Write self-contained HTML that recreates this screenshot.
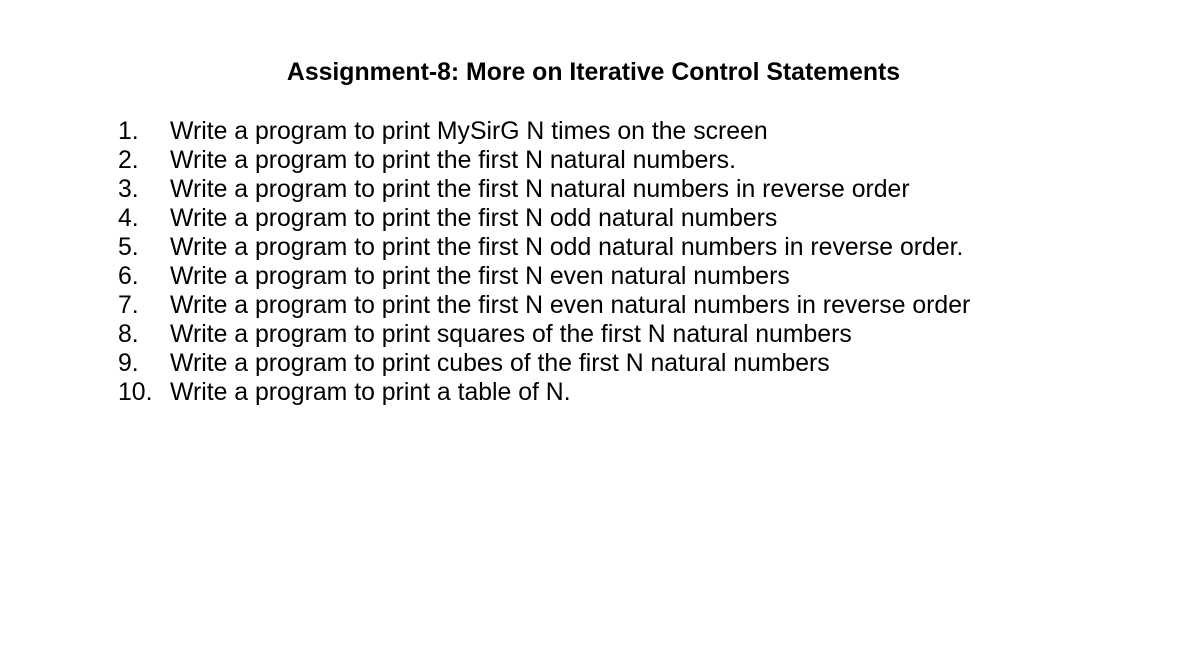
<!DOCTYPE html>
<html><head><meta charset="utf-8"><style>
body{margin:0;width:1193px;height:651px;background:#fff;font-family:"Liberation Sans",sans-serif;color:#000;position:relative;overflow:hidden}
h1{position:absolute;left:0;width:1187px;top:58px;margin:0;text-align:center;font-size:24.8px;font-weight:bold;line-height:29px}
.l{position:absolute;font-size:24.8px;line-height:29px;white-space:nowrap}
.n{left:118px}.t{left:170px}
</style></head><body>
<h1>Assignment-8: More on Iterative Control Statements</h1>
<div class="l n" style="top:117px">1.<br>2.<br>3.<br>4.<br>5.<br>6.<br>7.<br>8.<br>9.<br>10.</div>
<div class="l t" style="top:117px">Write a program to print MySirG N times on the screen<br>Write a program to print the first N natural numbers.<br>Write a program to print the first N natural numbers in reverse order<br>Write a program to print the first N odd natural numbers<br>Write a program to print the first N odd natural numbers in reverse order.<br>Write a program to print the first N even natural numbers<br>Write a program to print the first N even natural numbers in reverse order<br>Write a program to print squares of the first N natural numbers<br>Write a program to print cubes of the first N natural numbers<br>Write a program to print a table of N.</div>
</body></html>
